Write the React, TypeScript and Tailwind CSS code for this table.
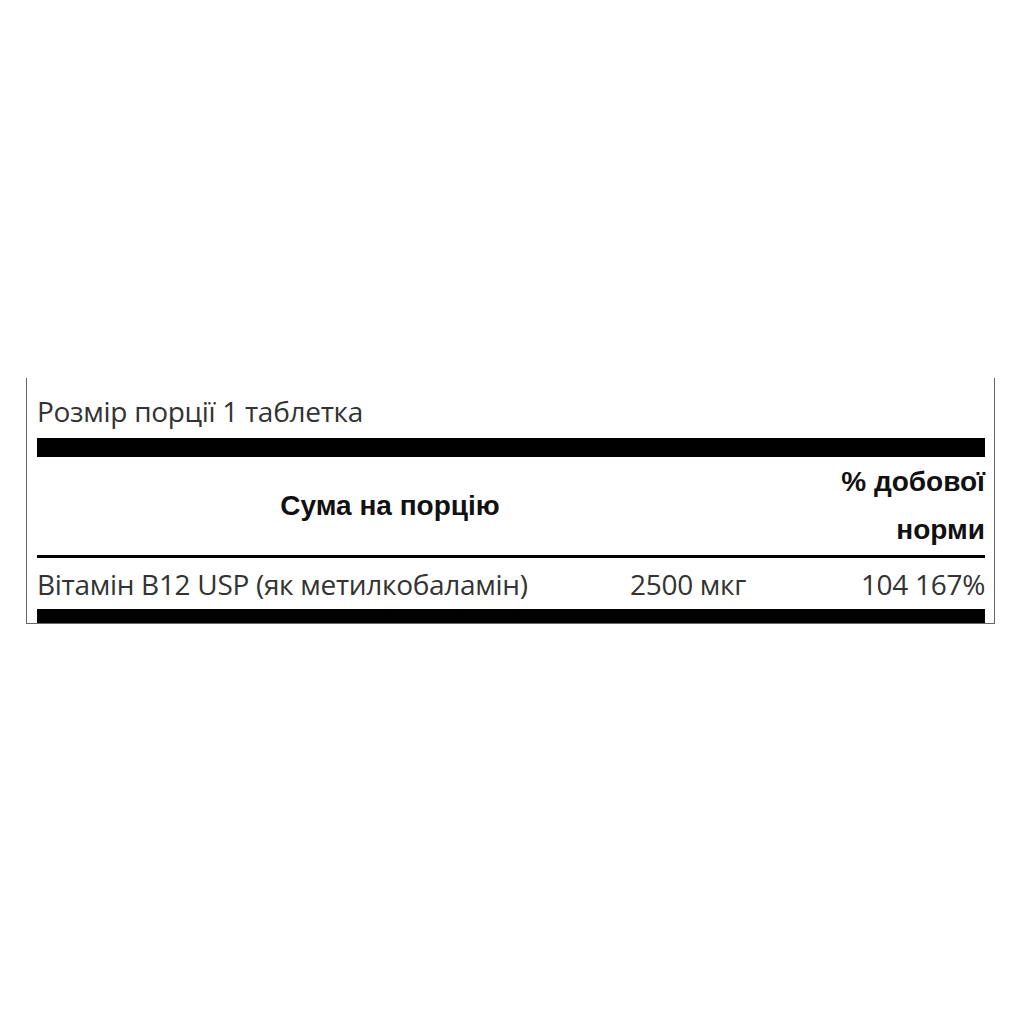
export default function App() {
  return (
    <div className="h-[1024px] w-[1024px] overflow-hidden bg-white pt-[378px]">
      <div className="ml-[26px] w-[969px] border-x border-b border-[#666] pl-[10px] pr-[9px]">
        <div className="flex h-[60px] items-center pt-[6px] text-[28px] tracking-[-0.3px] text-[#333] [font-family:'Open_Sans',sans-serif]">
          Розмір порції 1 таблетка
        </div>
        <div className="h-[19px] bg-black" />
        <div className="flex h-[98px] items-center [font-family:'Liberation_Sans',Arial,sans-serif] text-[28px] font-bold text-[#111]">
          <div className="w-[706px] text-center">Сума на порцію</div>
          <div className="flex-1 text-right leading-[48px]">
            % добової
            <br />
            норми
          </div>
        </div>
        <div className="h-[3px] bg-black" />
        <div className="flex h-[51px] items-center text-[28px] tracking-[-0.3px] text-[#333] [font-family:'Open_Sans',sans-serif]">
          <div className="w-[593px]">Вітамін B12 USP (як метилкобаламін)</div>
          <div className="w-[200px]">2500 мкг</div>
          <div className="flex-1 text-right">104 167%</div>
        </div>
        <div className="h-[14px] bg-black" />
      </div>
    </div>
  );
}
